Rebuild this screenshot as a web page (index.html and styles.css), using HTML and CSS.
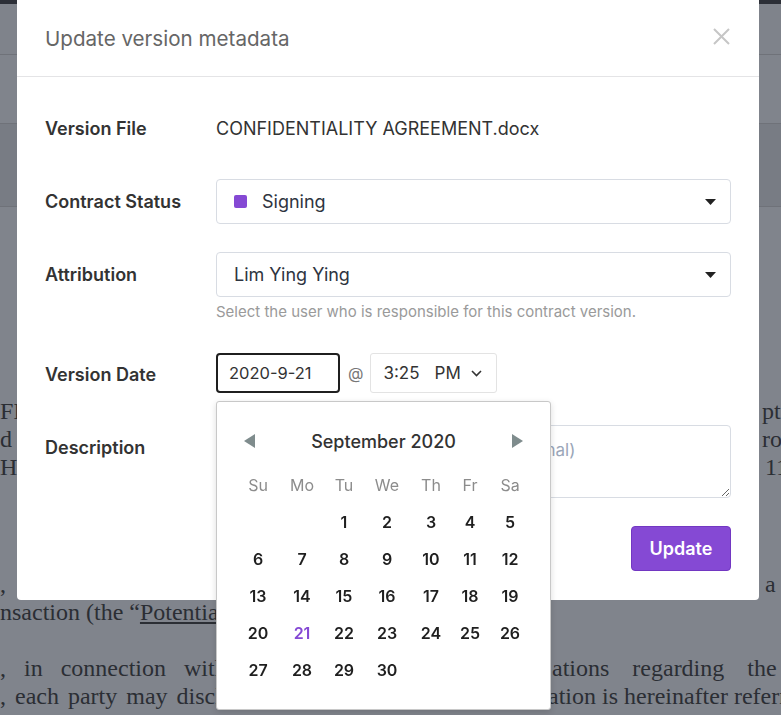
FILE: index.html
```html
<!DOCTYPE html>
<html lang="en">
<head>
<meta charset="utf-8">
<title>Update version metadata</title>
<link rel="stylesheet" href="styles.css">
</head>
<body>
<div class="app">
  <div class="topbar"></div>
  <div class="band band-1"></div>
  <div class="band band-2"></div>
  <div class="band band-3"></div>
  <div class="doc">
    <p class="para p1">
      <span class="line"><span>FI</span><span class="r r-a">pter</span></span>
      <span class="line"><span>d</span><span class="r r-a">rod</span></span>
      <span class="line"><span>Ho</span><span class="r r-b">11.</span></span>
    </p>
    <p class="para p2">
      <span class="line"><span>,</span><span class="r r-b">a</span></span>
      <span class="line"><span>nsaction (the “<u>Potential Transaction</u>”).</span></span>
    </p>
    <p class="para p3">
      <span class="line"><span class="spread">, in connection with the</span><span class="r r-c spread-r">ations regarding the</span></span>
      <span class="line"><span class="spread-s">, each party may disclose</span><span class="r r-d">ation is hereinafter referred</span></span>
    </p>
  </div>
</div>

<div class="modal">
  <div class="modal-header">
    <h2 class="modal-title">Update version metadata</h2>
    <svg class="close" width="17" height="17" viewBox="0 0 17 17" aria-label="Close">
      <path d="M1 1 L16 16 M16 1 L1 16" stroke="#c6c6c6" stroke-width="2" fill="none"/>
    </svg>
  </div>
  <div class="modal-body">
    <div class="row">
      <div class="label">Version File</div>
      <div class="field"><div class="file-name">CONFIDENTIALITY AGREEMENT.docx</div></div>
    </div>
    <div class="row">
      <div class="label">Contract Status</div>
      <div class="field">
        <div class="select">
          <span class="swatch"></span><span class="select-text">Signing</span>
          <svg class="caret" width="11" height="6" viewBox="0 0 11 6"><path d="M0 0 H11 L5.5 6 Z" fill="#222"/></svg>
        </div>
      </div>
    </div>
    <div class="row">
      <div class="label">Attribution</div>
      <div class="field">
        <div class="select">
          <span class="select-text">Lim Ying Ying</span>
          <svg class="caret" width="11" height="6" viewBox="0 0 11 6"><path d="M0 0 H11 L5.5 6 Z" fill="#222"/></svg>
        </div>
        <div class="help">Select the user who is responsible for this contract version.</div>
      </div>
    </div>
    <div class="row row-date">
      <div class="label label-date">Version Date</div>
      <div class="field date-field">
        <div class="date-input">2020-9-21</div>
        <span class="at">@</span>
        <div class="time-select">
          <span>3:25</span><span class="ampm">PM</span>
          <svg class="chev" width="11" height="7" viewBox="0 0 11 7"><path d="M1 1 L5.5 5.5 L10 1" stroke="#333" stroke-width="1.6" fill="none"/></svg>
        </div>
        <div class="calendar">
          <div class="cal-head">
            <svg width="11" height="14" viewBox="0 0 11 14"><path d="M11 0 V14 L0 7 Z" fill="#7f8c8d"/></svg>
            <span class="cal-month">September 2020</span>
            <svg width="11" height="14" viewBox="0 0 11 14"><path d="M0 0 V14 L11 7 Z" fill="#7f8c8d"/></svg>
          </div>
          <div class="cal-grid">
            <span class="wd">Su</span><span class="wd">Mo</span><span class="wd">Tu</span><span class="wd">We</span><span class="wd">Th</span><span class="wd">Fr</span><span class="wd">Sa</span>
            <span class="d"></span><span class="d"></span><span class="d">1</span><span class="d">2</span><span class="d">3</span><span class="d">4</span><span class="d">5</span>
            <span class="d">6</span><span class="d">7</span><span class="d">8</span><span class="d">9</span><span class="d">10</span><span class="d">11</span><span class="d">12</span>
            <span class="d">13</span><span class="d">14</span><span class="d">15</span><span class="d">16</span><span class="d">17</span><span class="d">18</span><span class="d">19</span>
            <span class="d">20</span><span class="d sel">21</span><span class="d">22</span><span class="d">23</span><span class="d">24</span><span class="d">25</span><span class="d">26</span>
            <span class="d">27</span><span class="d">28</span><span class="d">29</span><span class="d">30</span><span class="d"></span><span class="d"></span><span class="d"></span>
          </div>
        </div>
      </div>
    </div>
    <div class="row">
      <div class="label">Description</div>
      <div class="field"><textarea class="textarea" placeholder="Add a description of this version (optional)"></textarea></div>
    </div>
    <div class="actions"><button class="btn" type="button">Update</button></div>
  </div>
</div>
</body>
</html>
```
FILE: styles.css
```css
html, body {
  margin: 0;
  padding: 0;
  overflow: hidden;
  height: 100%;
}
body {
  background: #80848c;
  font-family: Inter, "Noto Sans", sans-serif;
}
.app {
  width: 781px;
}
.topbar {
  height: 4px;
  background: #2c2f37;
}
.band {
  border-bottom: 1px solid #6f7279;
}
.band-1 { height: 50px; background: #7f838b; }
.band-2 { height: 68px; background: #80848c; }
.band-3 { height: 82px; background: #787c84; }

.doc {
  font-family: "Liberation Serif", "Times New Roman", serif;
  font-size: 24px;
  line-height: 28px;
  color: #2b2e34;
}
.para { margin: 0; }
.p1 { margin-top: 190px; }
.p2 { margin-top: 89px; }
.p3 { margin-top: 28px; }
.line {
  display: flex;
  justify-content: space-between;
  width: 800px;
  white-space: nowrap;
}
.r { flex: 0 0 auto; }
.r-a { width: 38px; }
.r-b { width: 35px; }
.r-c { width: 248px; }
.r-d { width: 252px; }
.spread { word-spacing: 12px; }
.spread-r { word-spacing: 17px; }
.spread-s { word-spacing: 3px; }

/* modal */
.modal {
  position: fixed;
  top: 0;
  left: 17px;
  width: 742px;
  background: #fff;
  border-radius: 0 0 4px 4px;
}
.modal-header {
  height: 77px;
  border-bottom: 1px solid #e4e4e6;
  box-sizing: border-box;
  display: flex;
  align-items: center;
  justify-content: space-between;
  padding: 0 29px 0 28px;
}
.modal-title {
  margin: 0;
  font-size: 20.6px;
  font-weight: 400;
  color: #666;
}
.close { margin-top: -4px; }

.modal-body {
  padding: 29px 28px 29px;
  display: flex;
  flex-direction: column;
  gap: 28px;
}
.row {
  display: flex;
}
.label {
  width: 171px;
  flex: 0 0 171px;
  line-height: 45px;
  font-size: 18px;
  font-weight: 600;
  color: #333;
}
.label-date { line-height: 44px; }
.field {
  flex: 1;
  min-width: 0;
}
.file-name {
  line-height: 45px;
  font-size: 18px;
  color: #333;
}
.select {
  height: 45px;
  box-sizing: border-box;
  border: 1px solid #d8dce3;
  border-radius: 4px;
  display: flex;
  align-items: center;
  padding: 0 14px 0 17px;
  font-size: 18px;
  color: #2e3440;
}
.swatch {
  width: 13px;
  height: 13px;
  border-radius: 2px;
  background: #8549d4;
  margin-right: 15px;
}
.caret { margin-left: auto; }
.help {
  margin-top: 5px;
  line-height: 20px;
  font-size: 15px;
  color: #9a9a9a;
}
.row-date { margin-top: 3px; }
.date-field {
  position: relative;
  display: flex;
  align-items: flex-start;
}
.date-input {
  width: 124px;
  height: 40px;
  box-sizing: border-box;
  border: 2px solid #1f1f1f;
  border-radius: 4px;
  padding-left: 11px;
  line-height: 36px;
  font-size: 16.5px;
  color: #333;
}
.at {
  line-height: 40px;
  font-size: 16px;
  color: #777;
  margin: 0 7px 0 8px;
}
.time-select {
  width: 127px;
  height: 40px;
  box-sizing: border-box;
  border: 1px solid #e3e3e3;
  border-radius: 3px;
  padding: 0 0 0 12px;
  display: flex;
  align-items: center;
  font-size: 17px;
  color: #333;
}
.ampm { margin-left: 15px; }
.chev { margin-left: 10px; }

.calendar {
  position: absolute;
  top: 48px;
  left: 0;
  width: 335px;
  height: 309px;
  box-sizing: border-box;
  background: #fff;
  border: 1px solid #c8c8c8;
  border-radius: 3px;
  box-shadow: 0 2px 6px rgba(0, 0, 0, 0.14);
  padding: 20px 18px 20px 19px;
  z-index: 2;
}
.cal-head {
  height: 38px;
  display: flex;
  align-items: center;
  justify-content: space-between;
  padding: 0 9px 0 8px;
  margin-bottom: 7px;
}
.cal-month {
  font-size: 18px;
  font-weight: 500;
  color: #333;
}
.cal-grid {
  display: grid;
  grid-template-columns: 44px 44px 40px 46px 42px 36px 44px;
  grid-auto-rows: 37px;
}
.wd, .d {
  text-align: center;
  line-height: 37px;
  font-size: 16px;
}
.wd {
  color: #8c8c8c;
}
.d {
  font-weight: 600;
  color: #1f1f1f;
}
.d.sel { color: #8549d4; }

.textarea {
  display: block;
  width: 100%;
  height: 73px;
  box-sizing: border-box;
  border: 1px solid #d8dce3;
  border-radius: 4px;
  padding: 12px 17px;
  font-family: inherit;
  font-size: 17px;
  line-height: 24px;
  color: #333;
  resize: vertical;
  margin: 0;
}
.textarea::placeholder { color: #9aa6b8; }

.actions {
  display: flex;
  justify-content: flex-end;
}
.btn {
  width: 100px;
  height: 45px;
  background: #8549d4;
  border: 1px solid #7237c2;
  border-radius: 4px;
  color: #fff;
  font-family: inherit;
  font-size: 18px;
  font-weight: 600;
  padding: 0;
}
```
